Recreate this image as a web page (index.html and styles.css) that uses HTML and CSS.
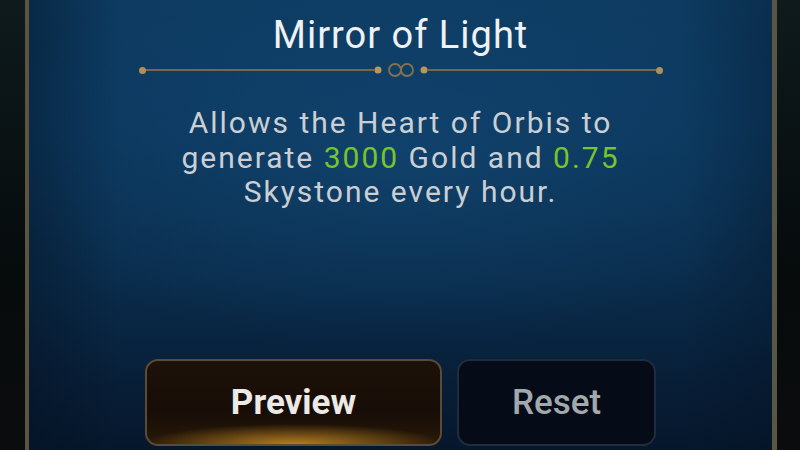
FILE: index.html
```html
<!DOCTYPE html>
<html lang="en">
<head>
  <meta charset="UTF-8" />
  <meta name="viewport" content="width=device-width, initial-scale=1.0" />
  <title>Mirror of Light</title>
  <link rel="stylesheet" href="styles.css">
</head>
<body>
  <div class="panel">
    <h1 class="title">Mirror of Light</h1>
    <div class="divider">
      <span class="dot"></span>
      <span class="rule"></span>
      <svg class="knot" width="54" height="16" viewBox="0 0 54 16">
        <circle cx="4" cy="8" r="3.5" fill="#b8975c" />
        <circle cx="21" cy="8" r="6" fill="none" stroke="#86714c" stroke-width="1.8" />
        <circle cx="33" cy="8" r="6" fill="none" stroke="#86714c" stroke-width="1.8" />
        <circle cx="50" cy="8" r="3.5" fill="#b8975c" />
      </svg>
      <span class="rule"></span>
      <span class="dot"></span>
    </div>
    <p class="desc">
      Allows the Heart of Orbis to<br>
      generate <span class="num">3000</span> Gold and <span class="num">0.75</span><br>
      Skystone every hour.
    </p>
    <div class="actions">
      <button class="btn btn-preview">Preview</button>
      <button class="btn btn-reset">Reset</button>
    </div>
  </div>
</body>
</html>
```

FILE: styles.css
```css
/* Page */
body {
  margin: 0;
  width: 800px;
  height: 450px;
  overflow: hidden;
  background: linear-gradient(180deg, #0e1a1c, #060b0c 60%, #0b0c0d);
  font-family: Roboto, "Liberation Sans", sans-serif;
}
.panel {
  box-sizing: border-box;
  margin-left: 25px;
  width: 752px;
  height: 450px;
  border-left: 4px solid #5d5440;
  border-right: 5px solid #5a5646;
  background:
    radial-gradient(ellipse 420px 200px at 50% 150px, rgba(22, 78, 125, 0.5), transparent),
    linear-gradient(90deg, rgba(3, 16, 32, 0.4), transparent 12%, transparent 88%, rgba(3, 16, 32, 0.3)),
    linear-gradient(180deg, #0d3b61 0%, #0b365b 30%, #0a2c4b 62%, #081e37 85%, #06172c 100%);
  display: flex;
  flex-direction: column;
  align-items: center;
}

/* Heading */
.title {
  margin: 12px 0 0;
  font-size: 38px;
  line-height: 46px;
  font-weight: 400;
  color: #eef2f4;
  letter-spacing: 1px;
}
.divider {
  margin-top: 4px;
  width: 524px;
  height: 16px;
  display: flex;
  align-items: center;
}
.divider .dot {
  width: 7px;
  height: 7px;
  border-radius: 50%;
  background: #b0905a;
}
.divider .rule {
  flex: 1;
  height: 2px;
  background: #7a6648;
}
.divider .knot {
  display: block;
}

/* Description */
.desc {
  margin: 28px 0 0;
  font-size: 30px;
  line-height: 34.5px;
  color: #cbcfd3;
  text-align: center;
  letter-spacing: 2px;
}
.num {
  color: #76c52a;
}

/* Buttons */
.actions {
  margin-top: auto;
  margin-bottom: 4px;
  display: flex;
  gap: 15px;
}
.btn {
  height: 87px;
  border-radius: 13px;
  font-family: Roboto, "Liberation Sans", sans-serif;
  font-size: 35px;
  cursor: pointer;
}
.btn-preview {
  width: 297px;
  border: 2px solid #5b4a36;
  color: #eceae6;
  font-weight: 700;
  background:
    radial-gradient(ellipse 150px 20px at 50% 100%, rgba(214, 150, 40, 0.8), transparent),
    linear-gradient(180deg, #1d1209, #170d07 60%, #281908);
}
.btn-reset {
  width: 199px;
  border: 2px solid #1f2c3b;
  color: #a3a8ad;
  font-weight: 500;
  background: #050c17;
}
```
